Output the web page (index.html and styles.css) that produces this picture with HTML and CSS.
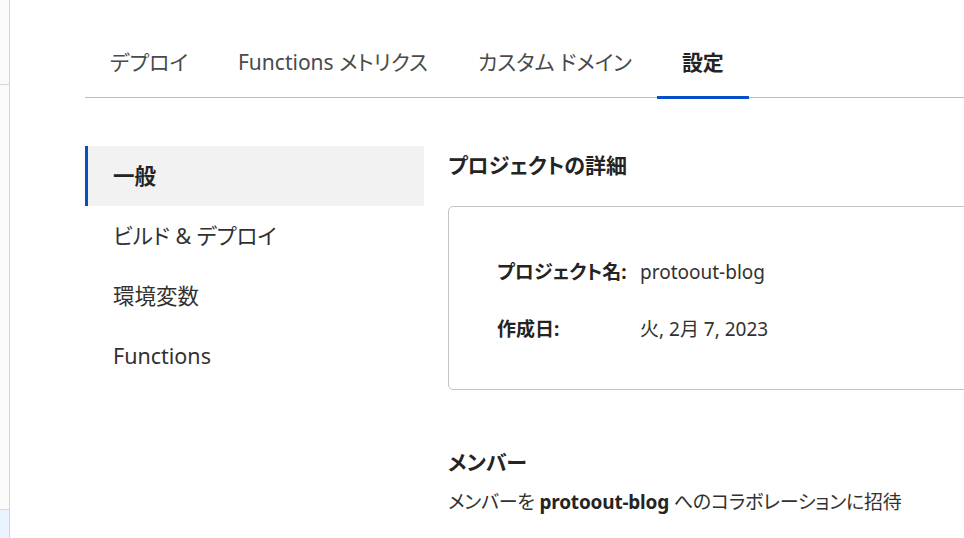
FILE: index.html
```html
<!DOCTYPE html>
<html lang="ja">
<head>
  <meta charset="UTF-8">
  <title>設定 - protoout-blog</title>
  <link rel="stylesheet" href="styles.css">
</head>
<body>

<div class="side-strip">
  <div class="strip-top"></div>
  <div class="strip-fill"></div>
  <div class="strip-active"></div>
</div>

<div class="page">
  <div class="tabs">
    <div class="tab">デプロイ</div>
    <div class="tab">Functions メトリクス</div>
    <div class="tab">カスタム ドメイン</div>
    <div class="tab active">設定</div>
  </div>

  <div class="settings">
    <div class="menu">
      <div class="menu-item active">一般</div>
      <div class="menu-item">ビルド &amp; デプロイ</div>
      <div class="menu-item">環境変数</div>
      <div class="menu-item">Functions</div>
    </div>

    <div class="content">
      <h2>プロジェクトの詳細</h2>
      <div class="card">
        <div class="row">
          <span class="label">プロジェクト名:</span>
          <span class="value">protoout-blog</span>
        </div>
        <div class="row">
          <span class="label">作成日:</span>
          <span class="value">火, 2月 7, 2023</span>
        </div>
      </div>

      <h2 class="members">メンバー</h2>
      <p class="invite">メンバーを <strong>protoout-blog</strong> へのコラボレーションに招待</p>
    </div>
  </div>
</div>

</body>
</html>
```

FILE: styles.css
```css
html, body {
  height: 100%;
}

body {
  margin: 0;
  padding: 0;
  display: flex;
  overflow: hidden;
  background-color: #fff;
  color: #323130;
  font-family: "Noto Sans", "Noto Sans CJK JP", sans-serif;
  font-feature-settings: "palt";
}

.side-strip {
  width: 9px;
  flex: none;
  display: flex;
  flex-direction: column;
  background-color: #fafafa;
  border-right: 1px solid #d6d6d6;
}

.strip-top {
  height: 84px;
  border-bottom: 1px solid #d6d6d6;
}

.strip-fill {
  flex: 1;
}

.strip-active {
  height: 28px;
  background-color: #ebf3fe;
  border-top: 1px solid #c7dbf9;
}

.page {
  flex: 1;
  padding-left: 75px;
  min-width: 0;
}

.tabs {
  display: flex;
  margin-top: 30px;
  border-bottom: 1px solid #bdbdbd;
  width: 1000px;
}

.tab {
  position: relative;
  padding: 0 25px;
  height: 67px;
  line-height: 64px;
  font-size: 21px;
  color: #4a4a4a;
  white-space: nowrap;
}

.tab.active {
  font-weight: bold;
  color: #252423;
}

.tab.active::after {
  content: "";
  position: absolute;
  left: 0;
  right: 0;
  bottom: -2px;
  height: 3px;
  background-color: #0550c8;
}

.settings {
  display: flex;
  margin-top: 48px;
}

.menu {
  width: 339px;
  flex: none;
}

.menu-item {
  height: 60px;
  line-height: 60px;
  padding-left: 28px;
  font-size: 21.5px;
  color: #323130;
  box-sizing: border-box;
}

.menu-item.active {
  background-color: #f2f2f2;
  border-left: 3px solid #0550c8;
  padding-left: 25px;
  font-weight: bold;
  color: #252423;
}

.content {
  margin-left: 24px;
  width: 620px;
  flex: none;
}

.content h2 {
  margin: 0;
  font-size: 21px;
  line-height: 38px;
  color: #252423;
}

.card {
  margin-top: 22px;
  border: 1px solid #c4c4c4;
  border-radius: 5px;
  padding: 40px 48px 36px;
  height: 184px;
  box-sizing: border-box;
}

.row {
  display: flex;
  height: 57px;
  line-height: 50px;
  font-size: 19px;
}

.label {
  width: 143px;
  font-weight: bold;
  color: #252423;
}

.value {
  color: #323130;
}

.content h2.members {
  margin-top: 53px;
}

.invite {
  margin: 6px 0 0;
  font-size: 19px;
  letter-spacing: -0.2px;
  color: #323130;
}

.invite strong {
  color: #252423;
}
```
